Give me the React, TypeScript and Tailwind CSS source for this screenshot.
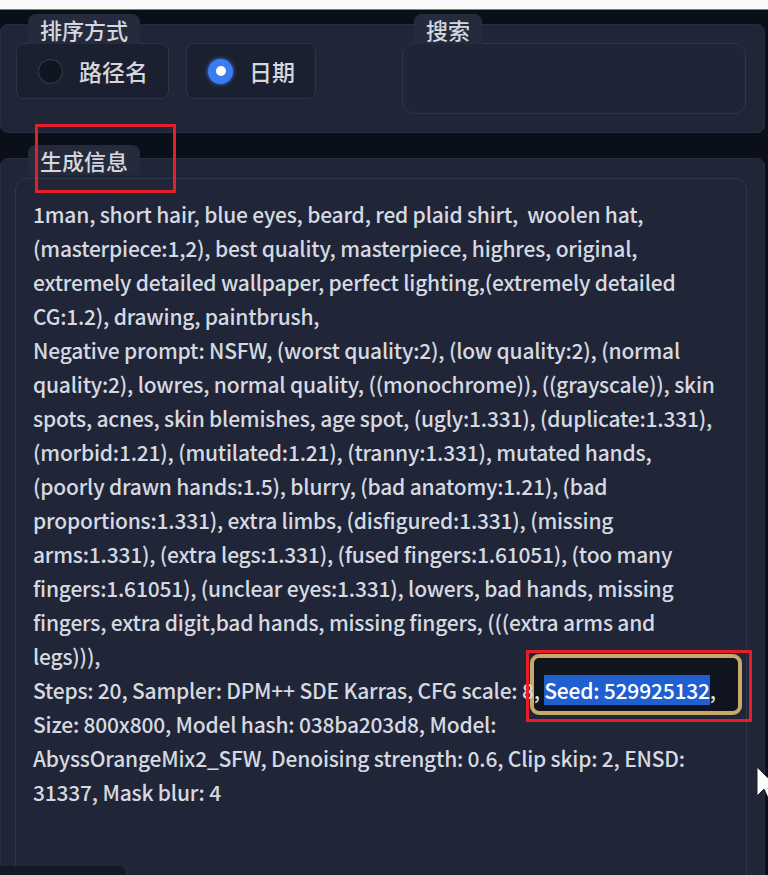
import React from "react";

const promptLines = [
  "1man, short hair, blue eyes, beard, red plaid shirt,  woolen hat,",
  "(masterpiece:1,2), best quality, masterpiece, highres, original,",
  "extremely detailed wallpaper, perfect lighting,(extremely detailed",
  "CG:1.2), drawing, paintbrush,",
  "Negative prompt: NSFW, (worst quality:2), (low quality:2), (normal",
  "quality:2), lowres, normal quality, ((monochrome)), ((grayscale)), skin",
  "spots, acnes, skin blemishes, age spot, (ugly:1.331), (duplicate:1.331),",
  "(morbid:1.21), (mutilated:1.21), (tranny:1.331), mutated hands,",
  "(poorly drawn hands:1.5), blurry, (bad anatomy:1.21), (bad",
  "proportions:1.331), extra limbs, (disfigured:1.331), (missing",
  "arms:1.331), (extra legs:1.331), (fused fingers:1.61051), (too many",
  "fingers:1.61051), (unclear eyes:1.331), lowers, bad hands, missing",
  "fingers, extra digit,bad hands, missing fingers, (((extra arms and",
  "legs))),",
];

const afterLines = [
  "Size: 800x800, Model hash: 038ba203d8, Model:",
  "AbyssOrangeMix2_SFW, Denoising strength: 0.6, Clip skip: 2, ENSD:",
  "31337, Mask blur: 4",
];

const Radio = ({ label, checked }: { label: string; checked?: boolean }) => (
  <label className="flex h-[56px] items-center gap-[16px] rounded-lg border border-[#2c3445] bg-[#1b2030] pl-[21px] pr-[20px] text-[23px] font-medium text-[#d4d7de]">
    {checked ? (
      <span className="flex h-[25px] w-[25px] items-center justify-center rounded-full bg-[#3b7cf0] shadow-[0_0_4px_#3b82f6]">
        <span className="h-[10px] w-[10px] rounded-full bg-white" />
      </span>
    ) : (
      <span className="h-[25px] w-[25px] rounded-full border border-[#374151] bg-[#111522]" />
    )}
    <span>{label}</span>
  </label>
);

const Tab = ({ text, className }: { text: string; className: string }) => (
  <div
    className={`absolute flex h-[30px] items-center rounded-t-lg bg-[#252b3c] px-[12px] text-[22px] font-medium text-[#d4d7de] ${className}`}
  >
    {text}
  </div>
);

export default function App() {
  return (
    <div className="relative h-[875px] w-[768px] overflow-hidden bg-[#0b0f19] font-['Noto_Sans_CJK_SC',sans-serif]">
      <div className="h-[10px] border-b border-[#7a7f88] bg-[#fafafa]" />

      {/* sort + search */}
      <div className="relative mt-[14px] flex h-[109px] w-[765px] rounded-lg border border-[#272e3f] bg-[#202638] pl-[15px] pt-[18px]">
        <Tab text="排序方式" className="-top-[11px] left-[27px]" />
        <Tab text="搜索" className="-top-[11px] left-[413px]" />
        <div className="flex w-[386px] gap-[17px]">
          <Radio label="路径名" />
          <Radio label="日期" checked />
        </div>
        <div className="h-[71px] w-[344px] rounded-xl border border-[#2e3648] bg-[#1f2536]" />
      </div>

      {/* generation info */}
      <div className="relative mt-[25px] h-[740px] w-[765px] rounded-lg border border-[#272e3f] bg-[#202638] pl-[14px] pt-[19px]">
        <Tab text="生成信息" className="-top-[14px] left-[27px]" />
        <div className="relative h-[720px] w-[732px] rounded-xl border border-[#2e3648] bg-[#202638] pl-[17px] pt-[18px] text-[21px] font-medium leading-[34px] tracking-[-0.2px] text-[#d6d9e0]">
          {promptLines.map((l, i) => (
            <div key={i} className="whitespace-pre">
              {l}
            </div>
          ))}
          <div className="relative whitespace-pre">
            <span className="absolute left-[497px] top-[-19px] h-[61px] w-[212px] rounded-[9px] border-[4px] border-[#c9a86a] bg-[#10141f]" />
            <span className="relative">Steps: 20, Sampler: DPM++ SDE Karras, CFG scale: 8, </span>
            <span className="relative bg-[#1f5fd0] text-white">Seed: 529925132</span>
            <span className="relative">,</span>
          </div>
          {afterLines.map((l, i) => (
            <div key={i} className="whitespace-pre">
              {l}
            </div>
          ))}
        </div>
      </div>

      {/* annotations */}
      <div className="absolute left-[35px] top-[124px] h-[69px] w-[141px] border-[3px] border-[#e3202a]" />
      <div className="absolute left-[526px] top-[650px] h-[72px] w-[226px] border-[3px] border-[#e3202a]" />

      <div className="absolute bottom-0 left-0 h-[9px] w-[125px] rounded-tr-md bg-[#141926]" />

      <svg className="absolute left-[756px] top-[766px]" width="16" height="36" viewBox="0 0 16 36">
        <path d="M1 1 L1 30 L8 23 L13 34 L16 32 L12 22 L22 22 Z" fill="#ffffff" stroke="#222" strokeWidth="1" />
      </svg>
    </div>
  );
}
